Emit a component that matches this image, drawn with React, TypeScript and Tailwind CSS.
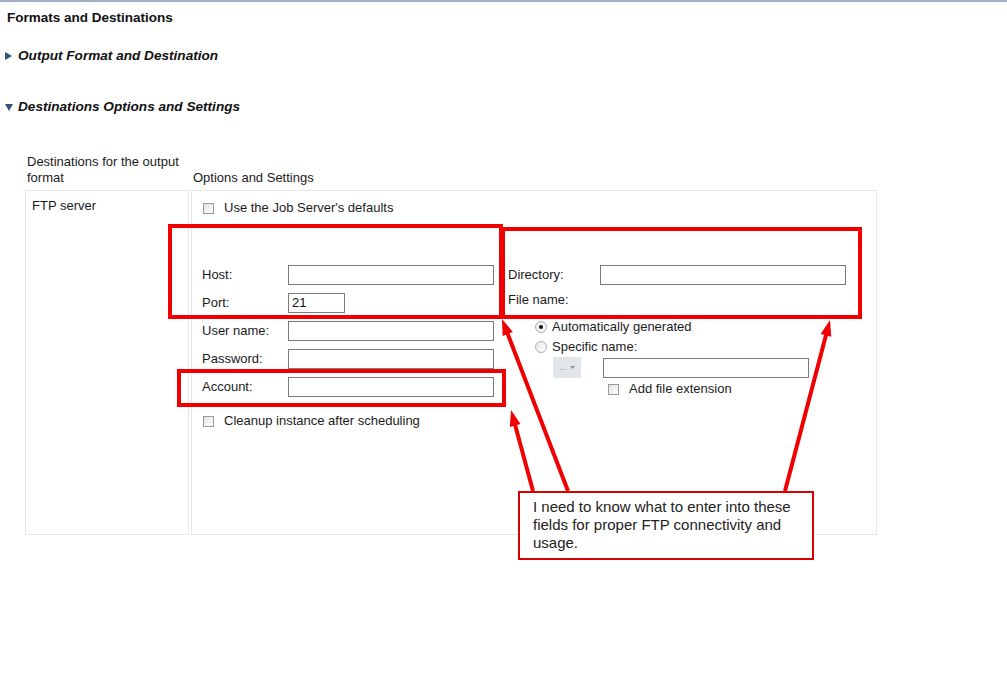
import React from "react";

const font = { fontFamily: '"Liberation Sans", Arial, sans-serif' };

function Checkbox({ className = "" }: { className?: string }) {
  return (
    <span
      className={`inline-block w-[11px] h-[11px] shrink-0 border border-[#9a9a9a] bg-gradient-to-br from-[#e4e4e4] to-[#ffffff] ${className}`}
    />
  );
}

function Radio({ checked }: { checked?: boolean }) {
  return (
    <span className="relative inline-flex w-[12px] h-[12px] shrink-0 rounded-full border border-[#b0b0b0] bg-gradient-to-br from-[#e6e6e6] to-white items-center justify-center">
      {checked && <span className="w-[4px] h-[4px] rounded-full bg-[#111]" />}
    </span>
  );
}

function Field({ label, width = 206, value }: { label: string; width?: number; value?: string }) {
  return (
    <div className="flex items-center h-[20px]">
      <span className="w-[86px] text-[#1b1b1b]">{label}</span>
      <div
        className="h-[20px] border border-[#7a7a7a] bg-white leading-[18px] px-[3px] text-[#111]"
        style={{ width }}
      >
        {value}
      </div>
    </div>
  );
}

type Arrow = { tail: [number, number]; tip: [number, number] };

const arrows: Arrow[] = [
  { tail: [533, 491], tip: [511, 410] },
  { tail: [568, 491], tip: [502, 319] },
  { tail: [785, 491], tip: [830, 320] },
];

function head({ tail, tip }: Arrow) {
  const dx = tip[0] - tail[0];
  const dy = tip[1] - tail[1];
  const len = Math.hypot(dx, dy);
  const ux = dx / len;
  const uy = dy / len;
  const bx = tip[0] - ux * 16;
  const by = tip[1] - uy * 16;
  const px = -uy * 5.5;
  const py = ux * 5.5;
  return {
    points: `${tip[0]},${tip[1]} ${bx + px},${by + py} ${bx - px},${by - py}`,
    end: [tip[0] - ux * 12, tip[1] - uy * 12],
  };
}

export default function App() {
  return (
    <div className="relative w-[1007px] h-[686px] bg-white overflow-hidden" style={font}>
      <div className="border-t-2 border-[#a2adc3]" />
      <div className="pl-[7px] pt-[8px] text-[13.5px] leading-[16px] font-bold text-[#111]">
        Formats and Destinations
      </div>

      <div className="mt-[22px] flex items-center h-[16px] pl-[5px]">
        <svg width="7" height="8" viewBox="0 0 7 8" className="mr-[6px]">
          <polygon points="0,0 7,4 0,8" fill="#36507e" />
        </svg>
        <span className="text-[13.6px] font-bold italic text-[#111]">Output Format and Destination</span>
      </div>

      <div className="mt-[35px] flex items-center h-[16px] pl-[5px]">
        <svg width="8" height="7" viewBox="0 0 8 7" className="mr-[5px]">
          <polygon points="0,0 8,0 4,7" fill="#36507e" />
        </svg>
        <span className="text-[13.6px] font-bold italic text-[#111]">Destinations Options and Settings</span>
      </div>

      <div className="mt-[39px] ml-[25px] flex items-end text-[13px] leading-[16px] text-[#1b1b1b]">
        <div className="w-[166px] pl-[2px]">
          Destinations for the output
          <br />
          format
        </div>
        <div className="pl-[2px]">Options and Settings</div>
      </div>

      <div className="mt-[4px] ml-[25px] flex gap-[2px] text-[13px] text-[#1b1b1b]">
        <div className="w-[164px] h-[345px] border border-[#e8e8e8] pl-[6px] pt-[7px] leading-[16px]">
          FTP server
        </div>
        <div className="w-[686px] h-[345px] border border-[#e8e8e8] pl-[10px] pt-[9px]">
          <div className="flex items-center h-[16px] pl-[1px]">
            <Checkbox />
            <span className="ml-[10px]">Use the Job Server's defaults</span>
          </div>

          <div className="mt-[49px] flex">
            <div className="w-[306px]">
              <div className="flex flex-col gap-[8px]">
                <Field label="Host:" />
                <Field label="Port:" width={57} value="21" />
                <Field label="User name:" />
                <Field label="Password:" />
                <Field label="Account:" />
              </div>
              <div className="mt-[16px] flex items-center h-[16px] pl-[1px]">
                <Checkbox />
                <span className="ml-[10px]">Cleanup instance after scheduling</span>
              </div>
            </div>

            <div>
              <div className="flex items-center h-[20px]">
                <span className="w-[92px]">Directory:</span>
                <div className="w-[246px] h-[20px] border border-[#7a7a7a]" />
              </div>
              <div className="mt-[5px] flex items-center h-[20px]">File name:</div>
              <div className="mt-[9px] flex items-center h-[16px] pl-[27px]">
                <Radio checked />
                <span className="ml-[5px]">Automatically generated</span>
              </div>
              <div className="mt-[4px] flex items-center h-[16px] pl-[27px]">
                <Radio />
                <span className="ml-[5px]">Specific name:</span>
              </div>
              <div className="mt-[2px] flex items-center h-[21px] pl-[45px]">
                <div className="w-[28px] h-[21px] bg-[#e2e5ea] flex items-center justify-center gap-[3px] text-[9px] text-[#9aa0a8]">
                  <span>...</span>
                  <svg width="5" height="3" viewBox="0 0 5 3">
                    <polygon points="0,0 5,0 2.5,3" fill="#8a9099" />
                  </svg>
                </div>
                <div className="ml-[22px] w-[206px] h-[20px] border border-[#7a7a7a]" />
              </div>
              <div className="mt-[3px] flex items-center h-[16px] pl-[100px]">
                <Checkbox />
                <span className="ml-[10px]">Add file extension</span>
              </div>
            </div>
          </div>
        </div>
      </div>

      {/* annotation overlay */}
      <div className="absolute left-[168px] top-[224px] w-[335px] h-[95px] border-[4px] border-[#f00000]" />
      <div className="absolute left-[501px] top-[227px] w-[361px] h-[92px] border-[4px] border-[#f00000]" />
      <div className="absolute left-[177px] top-[369px] w-[329px] h-[38px] border-[4px] border-[#f00000]" />

      <svg className="absolute left-0 top-0" width="1007" height="686">
        {arrows.map((a, i) => {
          const h = head(a);
          return (
            <g key={i}>
              <line
                x1={a.tail[0]}
                y1={a.tail[1]}
                x2={h.end[0]}
                y2={h.end[1]}
                stroke="#f00000"
                strokeWidth="4"
              />
              <polygon points={h.points} fill="#f00000" />
            </g>
          );
        })}
      </svg>

      <div className="absolute left-[518px] top-[491px] w-[296px] h-[69px] border-2 border-[#d80000] bg-white pl-[13px] pt-[5px] text-[15px] leading-[18px] text-[#222]">
        I need to know what to enter into these
        <br />
        fields for proper FTP connectivity and
        <br />
        usage.
      </div>
    </div>
  );
}
